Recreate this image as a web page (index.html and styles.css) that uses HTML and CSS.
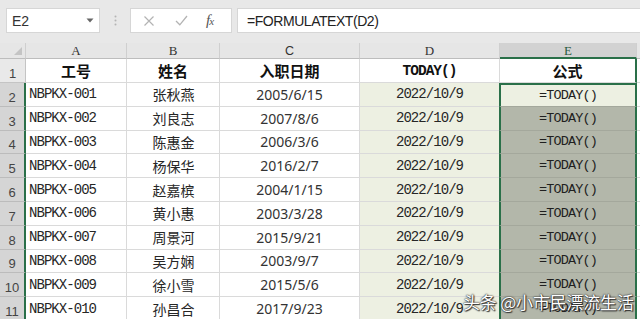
FILE: index.html
```html
<!DOCTYPE html>
<html lang="zh-CN">
<head>
<meta charset="utf-8">
<title>FORMULATEXT</title>
<link rel="stylesheet" href="styles.css">
</head>
<body>
<div class="app">
  <div class="fbar">
    <div class="namebox">
      <span class="nb-text">E2</span>
      <svg class="nb-arrow" width="8" height="5" viewBox="0 0 8 5"><path d="M0.5 0.5 H7.5 L4 4.5 Z" fill="#666"/></svg>
    </div>
    <div class="grip">
      <svg width="3" height="11" viewBox="0 0 3 11"><circle cx="1.5" cy="1.5" r="1" fill="#b4b4b4"/><circle cx="1.5" cy="5.5" r="1" fill="#b4b4b4"/><circle cx="1.5" cy="9.5" r="1" fill="#b4b4b4"/></svg>
    </div>
    <div class="fxbox">
      <svg class="ico" width="12" height="12" viewBox="0 0 12 12"><path d="M1.5 1.5 L10.5 10.5 M10.5 1.5 L1.5 10.5" stroke="#b3b3b3" stroke-width="1.2" fill="none"/></svg>
      <svg class="ico" width="13" height="11" viewBox="0 0 13 11"><path d="M1 6 L4.8 9.8 L12 1" stroke="#b3b3b3" stroke-width="1.3" fill="none"/></svg>
      <span class="fx">f<span class="fx-x">x</span></span>
    </div>
    <div class="finput">=FORMULATEXT(D2)</div>
  </div>

  <div class="sheet">
    <div class="corner"><span class="corner-tri"></span></div>
    <div class="ch serif">A</div>
    <div class="ch serif">B</div>
    <div class="ch sans">C</div>
    <div class="ch serif">D</div>
    <div class="ch serif ch-sel">E</div>
    <div class="ch ch-f"></div>

    <div class="rh rh-1">1</div>
    <div class="c hd cjk">工号</div>
    <div class="c hd cjk">姓名</div>
    <div class="c hd cjk">入职日期</div>
    <div class="c hd mono">TODAY()</div>
    <div class="c hd cjk hd-e">公式</div>
    <div class="c cf"></div>

    <div class="rh">2</div><div class="c id">NBPKX-001</div><div class="c nm">张秋燕</div><div class="c dt">2005/6/15</div><div class="c td">2022/10/9</div><div class="c fe fe-first">=TODAY()</div><div class="c cf"></div>
    <div class="rh">3</div><div class="c id">NBPKX-002</div><div class="c nm">刘良志</div><div class="c dt">2007/8/6</div><div class="c td">2022/10/9</div><div class="c fe">=TODAY()</div><div class="c cf"></div>
    <div class="rh">4</div><div class="c id">NBPKX-003</div><div class="c nm">陈惠金</div><div class="c dt">2006/3/6</div><div class="c td">2022/10/9</div><div class="c fe">=TODAY()</div><div class="c cf"></div>
    <div class="rh">5</div><div class="c id">NBPKX-004</div><div class="c nm">杨保华</div><div class="c dt">2016/2/7</div><div class="c td">2022/10/9</div><div class="c fe">=TODAY()</div><div class="c cf"></div>
    <div class="rh">6</div><div class="c id">NBPKX-005</div><div class="c nm">赵嘉槟</div><div class="c dt">2004/1/15</div><div class="c td">2022/10/9</div><div class="c fe">=TODAY()</div><div class="c cf"></div>
    <div class="rh">7</div><div class="c id">NBPKX-006</div><div class="c nm">黄小惠</div><div class="c dt">2003/3/28</div><div class="c td">2022/10/9</div><div class="c fe">=TODAY()</div><div class="c cf"></div>
    <div class="rh">8</div><div class="c id">NBPKX-007</div><div class="c nm">周景河</div><div class="c dt">2015/9/21</div><div class="c td">2022/10/9</div><div class="c fe">=TODAY()</div><div class="c cf"></div>
    <div class="rh">9</div><div class="c id">NBPKX-008</div><div class="c nm">吴方娴</div><div class="c dt">2003/9/7</div><div class="c td">2022/10/9</div><div class="c fe">=TODAY()</div><div class="c cf"></div>
    <div class="rh">10</div><div class="c id">NBPKX-009</div><div class="c nm">徐小雪</div><div class="c dt">2015/5/6</div><div class="c td">2022/10/9</div><div class="c fe">=TODAY()</div><div class="c cf"></div>
    <div class="rh">11</div><div class="c id">NBPKX-010</div><div class="c nm">孙昌合</div><div class="c dt">2017/9/23</div><div class="c td">2022/10/9</div><div class="c fe">=TODAY()</div><div class="c cf"></div>
  </div>

  <div class="wm">头条 @小市民漂流生活</div>
</div>
</body>
</html>
```

FILE: styles.css
```css
* { box-sizing: border-box; }
html, body { margin: 0; padding: 0; }
body {
  width: 640px;
  height: 319px;
  overflow: hidden;
  background: #e8e8e8;
  font-family: "Liberation Sans", Arial, sans-serif;
}
.app {
  position: relative;
  width: 640px;
  height: 319px;
  overflow: hidden;
}

/* formula bar */
.fbar {
  height: 43px;
  display: flex;
  align-items: flex-start;
  padding: 8px 0 0 6px;
  background: #e8e8e8;
}
.namebox {
  width: 94px;
  height: 25px;
  background: #fff;
  border: 1px solid #d6d6d6;
  display: flex;
  align-items: center;
  justify-content: space-between;
  padding: 0 4px 0 5px;
}
.nb-text {
  font-family: "Liberation Sans", Arial, sans-serif;
  font-size: 14px;
  color: #333;
}
.nb-arrow { margin-right: 1px; }
.grip {
  width: 30px;
  height: 25px;
  display: flex;
  align-items: center;
  justify-content: center;
}
.fxbox {
  width: 102px;
  height: 25px;
  background: #fff;
  border: 1px solid #d6d6d6;
  display: flex;
  align-items: center;
  padding-left: 12px;
}
.fxbox .ico:first-child { margin-right: 20px; }
.fxbox .ico:nth-child(2) { margin-right: 18px; }
.fx {
  font-family: "Liberation Serif", "Times New Roman", serif;
  font-style: italic;
  font-size: 15px;
  color: #555;
  letter-spacing: -1px;
  line-height: 1;
}
.fx-x { font-size: 11px; }
.finput {
  flex: 1;
  margin-left: 5px;
  height: 25px;
  background: #fff;
  border: 1px solid #d6d6d6;
  border-right: none;
  display: flex;
  align-items: center;
  padding-left: 9px;
  font-family: "Liberation Sans", Arial, sans-serif;
  font-size: 14px;
  color: #222;
  letter-spacing: -0.45px;
}

/* sheet grid */
.sheet {
  display: grid;
  grid-template-columns: 26px 101px 93px 140px 140px 137px 1fr;
  grid-template-rows: 16px 24px repeat(10, 23.8px);
  background: #fff;
}
.corner {
  background: #e6e6e6;
  border-right: 1px solid #cfcfcf;
  border-bottom: 1px solid #bdbdbd;
  position: relative;
}
.corner-tri {
  position: absolute;
  right: 3px;
  bottom: 3px;
  width: 0;
  height: 0;
  border-left: 8px solid transparent;
  border-bottom: 8px solid #c4c4c4;
}
.ch {
  background: #e6e6e6;
  border-right: 1px solid #cfcfcf;
  border-bottom: 1px solid #bdbdbd;
  display: flex;
  align-items: center;
  justify-content: center;
  font-size: 12px;
  color: #333;
  padding-top: 1px;
}
.ch.serif { font-family: "Liberation Serif", "Times New Roman", serif; font-size: 13px; }
.ch.sans { font-family: "Liberation Sans", Arial, sans-serif; font-size: 12.5px; }
.ch-sel {
  background: #d2d2d2;
  border-bottom: 2px solid #2a7049;
  color: #2a5a3e;
}
.ch-f { border-right: none; }

.rh {
  background: #d5d5d5;
  border-bottom: 1px solid #bcbcbc;
  border-right: 2px solid #2a7049;
  display: flex;
  align-items: flex-end;
  justify-content: center;
  padding-bottom: 1px;
  font-family: "Liberation Sans", Arial, sans-serif;
  font-size: 13px;
  color: #444;
}
.rh-1 {
  background: #e9e9e9;
  border-right: 1px solid #c4c4c4;
  border-bottom: 1px solid #c4c4c4;
}

.c {
  border-right: 1px solid #dadada;
  border-bottom: 1px solid #dadada;
  display: flex;
  align-items: center;
  justify-content: center;
  color: #262626;
  white-space: nowrap;
  overflow: hidden;
}
.hd {
  font-weight: bold;
  color: #111;
}
.hd.cjk {
  font-family: "Noto Sans CJK SC", sans-serif;
  font-size: 15px;
}
.hd.mono {
  font-family: "Liberation Mono", "Courier New", monospace;
  font-size: 14.5px;
  letter-spacing: -1px;
}
.hd-e { border-right: 2px solid #2a7049; }
.id {
  justify-content: flex-start;
  padding-left: 3px;
  font-family: "Liberation Mono", "Courier New", monospace;
  font-size: 14px;
  letter-spacing: -0.95px;
}
.nm {
  font-family: "Noto Sans CJK SC", sans-serif;
  font-size: 14px;
  padding-left: 1px;
}
.dt {
  font-family: "Noto Sans", sans-serif;
  font-size: 14px;
  color: #333;
}
.td {
  background: #edf0e2;
  font-family: "Liberation Mono", "Courier New", monospace;
  font-size: 14px;
  letter-spacing: -0.95px;
}
.fe {
  background: #b3b7aa;
  border-left: 2px solid #2a7049;
  border-right: 2px solid #2a7049;
  border-bottom: 1px solid #a4a89c;
  font-family: "Liberation Mono", "Courier New", monospace;
  font-size: 13.5px;
  letter-spacing: -0.85px;
  color: #1f1f1f;
  margin-left: -1px;
}
.fe-first {
  background: #edf0e2;
  border-top: 2px solid #2a7049;
}
.cf {
  border-right: none;
  background: #fff;
}

/* watermark overlay */
.wm {
  position: absolute;
  left: 463px;
  top: 289px;
  font-family: "Noto Sans CJK SC", sans-serif;
  font-size: 17px;
  color: #fff;
  letter-spacing: -0.2px;
  white-space: nowrap;
  text-shadow: 0 0 1px #222, 0 0 2px #333, 1px 1px 1px #333;
}
```
